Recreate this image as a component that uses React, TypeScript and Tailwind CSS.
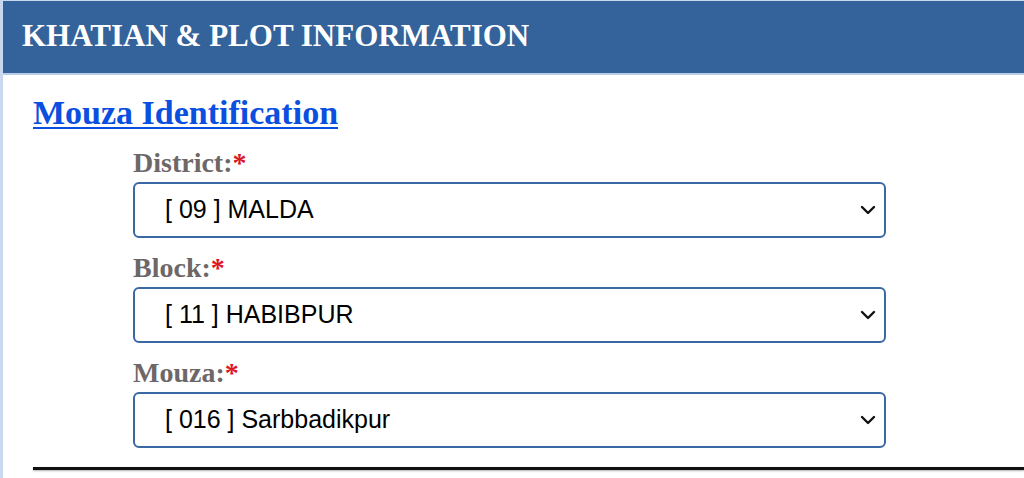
import React from "react";

const serif = { fontFamily: '"Liberation Serif", "Times New Roman", serif' };
const sans = { fontFamily: '"Liberation Sans", Arial, sans-serif' };

function Chevron() {
  return (
    <svg width="16" height="10" viewBox="0 0 16 10" fill="none">
      <polyline points="2,2 8,8 14,2" stroke="#111" strokeWidth="2.4" strokeLinecap="round" strokeLinejoin="round" />
    </svg>
  );
}

function Field({ label, value }: { label: string; value: string }) {
  return (
    <div className="flex flex-col">
      <div className="h-[28px] text-[28px] leading-[28px] font-bold text-[#6e6767]" style={serif}>
        {label}
        <span className="text-[#e0141e]">*</span>
      </div>
      <div className="mt-[5px] h-[56px] w-[753px] rounded-[6px] border-2 border-[#3b67a3] bg-white flex items-center justify-between pl-[30px] pr-[8px]">
        <span className="text-[25px] text-black" style={sans}>{value}</span>
        <Chevron />
      </div>
    </div>
  );
}

export default function App() {
  return (
    <div className="w-[1024px] h-[478px] overflow-hidden bg-white border-l-[3px] border-t border-[#c9d8ee]">
      <div className="h-[74px] bg-[#34629a] border-b-2 border-[#b9cde8] pl-[19px] pt-[19px]">
        <div className="text-[31px] leading-[31px] font-bold text-white" style={serif}>
          KHATIAN &amp; PLOT INFORMATION
        </div>
      </div>
      <div className="pl-[30px] pt-[21px]">
        <div className="text-[34px] leading-[34px] font-bold text-[#0b4fe0] underline decoration-2 underline-offset-[3px]" style={serif}>
          Mouza Identification
        </div>
        <div className="ml-[100px] mt-[19px] flex flex-col gap-[16px]">
          <Field label="District:" value="[ 09 ] MALDA" />
          <Field label="Block:" value="[ 11 ] HABIBPUR" />
          <Field label="Mouza:" value="[ 016 ] Sarbbadikpur" />
        </div>
        <div className="mt-[19px] h-[3px] bg-[#111] shadow-[0_1px_2px_rgba(0,0,0,0.3)]" />
      </div>
    </div>
  );
}
